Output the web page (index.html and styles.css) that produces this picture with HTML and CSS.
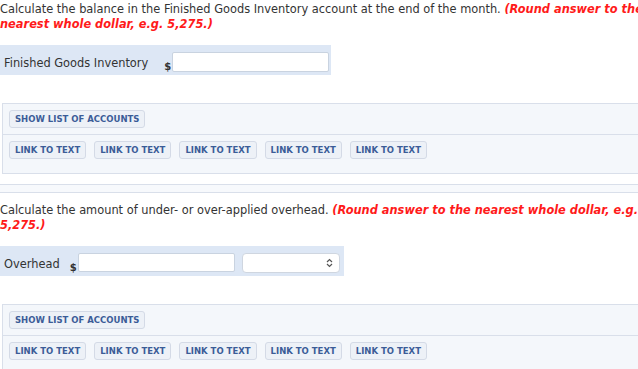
FILE: index.html
```html
<!DOCTYPE html>
<html lang="en">
<head>
    <meta charset="UTF-8">
    <title>Question</title>
    <link rel="stylesheet" href="styles.css">
</head>
<body>

    <div class="page">
        <!-- Parte 1 -->
        <div class="question">
            <p class="prompt">Calculate the balance in the Finished Goods Inventory account at the end of the month. <span class="hint">(Round answer to the nearest whole dollar, e.g. 5,275.)</span></p>

            <div class="answer-row">
                <label class="answer-label label-wide">Finished Goods Inventory</label>
                <span class="dollar">$</span>
                <input type="text" class="answer-input">
            </div>

            <div class="tools">
                <div class="tools-row">
                    <button class="tool-btn">Show List of Accounts</button>
                </div>
                <div class="tools-row">
                    <button class="tool-btn">Link to Text</button>
                    <button class="tool-btn">Link to Text</button>
                    <button class="tool-btn">Link to Text</button>
                    <button class="tool-btn">Link to Text</button>
                    <button class="tool-btn">Link to Text</button>
                </div>
            </div>
        </div>

        <div class="separator"></div>

        <!-- Parte 2 -->
        <div class="question">
            <p class="prompt">Calculate the amount of under- or over-applied overhead. <span class="hint">(Round answer to the nearest whole dollar, e.g. 5,275.)</span></p>

            <div class="answer-row">
                <label class="answer-label">Overhead</label>
                <span class="dollar">$</span>
                <input type="text" class="answer-input input-short">
                <div class="select-box">
                    <svg width="7" height="10" viewBox="0 0 7 10">
                        <path d="M1 4 L3.5 1.5 L6 4 M1 6 L3.5 8.5 L6 6" fill="none" stroke="#555" stroke-width="1.2"/>
                    </svg>
                </div>
            </div>

            <div class="tools">
                <div class="tools-row">
                    <button class="tool-btn">Show List of Accounts</button>
                </div>
                <div class="tools-row">
                    <button class="tool-btn">Link to Text</button>
                    <button class="tool-btn">Link to Text</button>
                    <button class="tool-btn">Link to Text</button>
                    <button class="tool-btn">Link to Text</button>
                    <button class="tool-btn">Link to Text</button>
                </div>
            </div>
        </div>
    </div>

</body>
</html>
```

FILE: styles.css
```css
body {
    font-family: "DejaVu Sans", Verdana, sans-serif;
    font-size: 11.4px;
    color: #333;
    margin: 0;
    background-color: #fff;
    overflow: hidden;
}

.page {
    width: 670px;
}

.prompt {
    margin: 0;
    padding-top: 2px;
    line-height: 15px;
}

.hint {
    color: #ff1a1a;
    font-weight: bold;
    font-style: italic;
}

.answer-row {
    display: inline-flex;
    align-items: flex-end;
    background-color: #dde7f5;
    padding: 7px 2px 3px 4px;
    margin-top: 13px;
}

.answer-label {
    align-self: flex-start;
    margin-top: 4px;
    margin-right: 10px;
}

.label-wide {
    margin-right: 16px;
}

.dollar {
    font-size: 10px;
    font-weight: bold;
    margin-right: 1px;
    line-height: 10px;
}

.answer-input {
    width: 155px;
    height: 18px;
    border: 1px solid #c9d3e0;
    border-radius: 2px;
    background-color: #fff;
    padding: 0;
    margin: 0;
}

.input-short {
    height: 17px;
    margin-bottom: 1px;
}

.select-box {
    width: 90px;
    height: 18px;
    margin-left: 7px;
    margin-right: 2px;
    border: 1px solid #cfd6e0;
    border-radius: 4px;
    background-color: #fff;
    display: flex;
    align-items: center;
    justify-content: flex-end;
    padding-right: 6px;
}

.tools {
    margin: 28px 0 0 2px;
    border: 1px solid #d9dfea;
    border-right: none;
    background-color: #f4f7fb;
}

.tools-row {
    display: flex;
    gap: 8px;
    padding: 6px 6px;
}

.tools-row + .tools-row {
    border-top: 1px solid #d9dfea;
    padding-bottom: 14px;
}

.tool-btn {
    font-family: "DejaVu Sans", Verdana, sans-serif;
    font-size: 8.5px;
    font-weight: bold;
    text-transform: uppercase;
    color: #3b5c97;
    background-color: #edf1f7;
    border: 1px solid #d4dae6;
    border-radius: 3px;
    padding: 0 5px;
    height: 18px;
    cursor: pointer;
}

.separator {
    margin: 10px 0 8px;
    height: 7px;
    border-top: 1px solid #d9dfea;
    border-bottom: 1px solid #d9dfea;
    background-color: #f7f9fc;
}
```
